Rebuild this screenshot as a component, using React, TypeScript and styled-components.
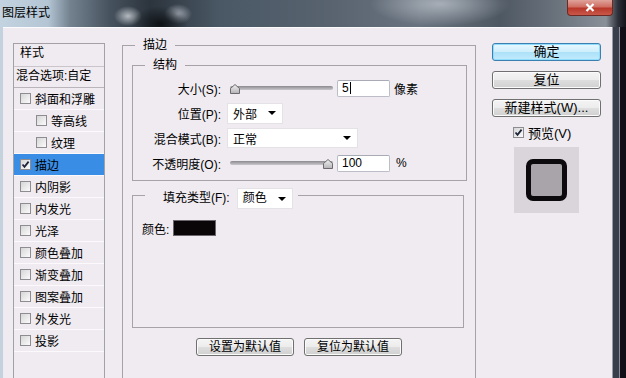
import styled, { createGlobalStyle } from 'styled-components';

const GlobalStyle = createGlobalStyle`
  html, body {
    margin: 0;
    padding: 0;
    background: #15131a;
  }
  body {
    font-family: "Liberation Sans", "Noto Sans CJK SC", sans-serif;
    font-size: 12px;
    color: #000;
  }
`;

const Window = styled.div`
  width: 626px;
  height: 378px;
  overflow: hidden;
  display: flex;
  flex-direction: column;
`;

const TitleBar = styled.div`
  height: 27px;
  flex: none;
  display: flex;
  align-items: flex-start;
  background:
    radial-gradient(ellipse 28px 18px at 160px 24px, #0e1216, transparent),
    radial-gradient(ellipse 14px 10px at 128px 16px, rgba(210, 215, 220, 0.8), transparent),
    radial-gradient(ellipse 14px 10px at 178px 14px, rgba(200, 205, 215, 0.7), transparent),
    radial-gradient(ellipse 70px 22px at 440px 4px, rgba(190, 196, 204, 0.75), transparent),
    linear-gradient(to right, #c3d3e0 0px, #b4c5d4 48px, #74828f 70px, #46525e 110px, #2c343d 150px,
      #4a5865 220px, #58636f 330px, #6a7480 420px, #4e5863 500px, #6c747e 560px, #8a9098 606px,
      #2c3038 618px, #15131a 626px);
`;

const Title = styled.div`
  padding-left: 2px;
  line-height: 26px;
  font-size: 12px;
  color: #000;
`;

const CloseButton = styled.div`
  margin-left: auto;
  margin-right: 13px;
  width: 46px;
  height: 16px;
  box-sizing: border-box;
  border: 1px solid #6e2a22;
  border-top: none;
  border-radius: 0 0 4px 4px;
  background: linear-gradient(#dfa39b 0%, #cf6e62 45%, #b8382a 55%, #c8584a 100%);
  display: flex;
  align-items: center;
  justify-content: center;
`;

const Frame = styled.div`
  flex: 1;
  display: flex;
  min-height: 0;
`;

const LeftEdge = styled.div`
  width: 3px;
  flex: none;
  background: #c4d2de;
`;

const RightEdge = styled.div`
  width: 14px;
  flex: none;
  background: linear-gradient(to right, #9a9aa4 0 1px, #383e4a 1px 7px, #8a8e98 7px 8px, #121016 8px);
`;

const Content = styled.div`
  flex: 1;
  display: flex;
  align-items: flex-start;
  padding-left: 10px;
  background: #efebf0;
  border-top: 1px solid #fbfafc;
  overflow: hidden;
`;

/* ---- left style list ---- */

const StyleList = styled.div`
  width: 92px;
  height: 360px;
  margin-top: 15px;
  flex: none;
  box-sizing: border-box;
  border: 1px solid #a3a0a6;
  display: flex;
  flex-direction: column;
`;

const ListHeader = styled.div`
  height: 23px;
  box-sizing: border-box;
  padding: 1px 0 0 6px;
  line-height: 16px;
  border-bottom: 1px solid #c9c5cb;
`;

const BlendRow = styled.div`
  height: 21px;
  box-sizing: border-box;
  padding-left: 2px;
  line-height: 19px;
  border-bottom: 1px solid #b9b5bb;
`;

const ListRow = styled.div<{ $indent?: boolean; $selected?: boolean }>`
  height: 22px;
  box-sizing: border-box;
  display: flex;
  align-items: center;
  gap: 4px;
  padding-left: ${p => (p.$indent ? 22 : 6)}px;
  border-bottom: 1px solid #fbf9fb;
  background: ${p => (p.$selected ? '#3a8de4' : 'transparent')};
`;

const Check = styled.span<{ $checked?: boolean }>`
  width: 11px;
  height: 11px;
  flex: none;
  box-sizing: border-box;
  border: 1px solid #8e8c90;
  background: linear-gradient(135deg, #d6d6d8, #fbfbfb);
  display: inline-flex;
  align-items: center;
  justify-content: center;
`;

/* ---- middle panel ---- */

const Middle = styled.div`
  width: 354px;
  margin: 9px 0 0 17px;
  flex: none;
`;

const Group = styled.fieldset<{ $mx?: string }>`
  margin: ${p => p.$mx || '0'};
  padding: 0;
  min-width: 0;
  border: 1px solid #a6a2a8;
`;

const Legend = styled.legend<{ $ml: number; $pl: number; $pr: number }>`
  margin-left: ${p => p.$ml}px;
  padding: 0 ${p => p.$pr}px 0 ${p => p.$pl}px;
  line-height: 16px;
  font-size: 12px;
`;

const FillLegend = styled.legend`
  margin-left: 12px;
  padding: 7px 5px 0 18px;
  display: flex;
  align-items: center;
  gap: 7px;
  line-height: 21px;
`;

const Form = styled.div`
  padding: 4px 0 6px;
  display: flex;
  flex-direction: column;
  gap: 3px;
`;

const FormRow = styled.div`
  height: 22px;
  display: grid;
  grid-template-columns: 88px 1fr;
  column-gap: 6px;
  align-items: center;
`;

const Label = styled.span`
  text-align: right;
  white-space: nowrap;
`;

const Control = styled.div`
  display: flex;
  align-items: center;
`;

const Track = styled.div`
  position: relative;
  width: 103px;
  height: 4px;
  margin-left: 3px;
  border-radius: 2px;
  background: linear-gradient(#8c8a8e, #c9c7cb);
`;

const Thumb = styled.svg`
  position: absolute;
  top: -2px;
`;

const Input = styled.div`
  width: 53px;
  height: 17px;
  margin-left: 4px;
  box-sizing: border-box;
  border: 1px solid #bcbdc6;
  border-top-color: #a9abb4;
  border-radius: 2px;
  background: #fff;
  padding-left: 4px;
  line-height: 15px;
  display: flex;
  align-items: center;
`;

const Caret = styled.span`
  width: 1px;
  height: 12px;
  margin-left: 1px;
  background: #000;
`;

const Unit = styled.span<{ $gap: number }>`
  margin-left: ${p => p.$gap}px;
`;

const Select = styled.div<{ $w: number; $h: number }>`
  width: ${p => p.$w}px;
  height: ${p => p.$h}px;
  box-sizing: border-box;
  border: 1px solid #e4e2e6;
  background: #fff;
  padding: 0 6px 0 5px;
  display: flex;
  align-items: center;
  justify-content: space-between;
`;

const FillBody = styled.div`
  height: 118px;
  box-sizing: border-box;
  padding: 11px 0 0 9px;
  display: flex;
  align-items: flex-start;
`;

const ColorRow = styled.div`
  display: flex;
  align-items: center;
  gap: 4px;
  height: 16px;
`;

const Swatch = styled.div`
  width: 43px;
  height: 16px;
  box-sizing: border-box;
  border: 1px solid #6a686c;
  background: #0a0608;
`;

const BottomButtons = styled.div`
  display: flex;
  justify-content: center;
  gap: 10px;
  margin-top: 10px;
  padding-bottom: 40px;
`;

const Button = styled.div<{ $w: number; $primary?: boolean; $size?: number }>`
  width: ${p => p.$w}px;
  height: 18px;
  box-sizing: border-box;
  border: 1px solid ${p => (p.$primary ? '#3c7fb1' : '#707070')};
  border-radius: 3px;
  background: ${p =>
    p.$primary
      ? 'linear-gradient(#e9f8ff 0%, #cdeefc 50%, #ace1f8 51%, #c2ebfc 100%)'
      : 'linear-gradient(#f4f4f4 0%, #ececec 50%, #dedede 51%, #d0d0d0 100%)'};
  box-shadow: ${p => (p.$primary ? 'inset 0 0 0 1px #8fdcfb' : 'inset 0 0 0 1px #fbfbfb')};
  font-size: ${p => p.$size || 12}px;
  line-height: 16px;
  text-align: center;
  white-space: nowrap;
`;

/* ---- right column ---- */

const Side = styled.div`
  width: 109px;
  margin: 15px 0 0 16px;
  flex: none;
  display: flex;
  flex-direction: column;
  gap: 10px;
`;

const PreviewToggle = styled.div`
  display: flex;
  align-items: center;
  gap: 4px;
  margin-left: 21px;
  height: 11px;
  font-size: 13px;
`;

const PreviewBox = styled.div`
  width: 65px;
  height: 66px;
  margin-top: -1px;
  align-self: center;
  background: #d9d5da;
  display: flex;
  align-items: center;
  justify-content: center;
`;

const PreviewShape = styled.div`
  width: 41px;
  height: 42px;
  box-sizing: border-box;
  border: 5px solid #0c0a0c;
  border-radius: 7px;
  background: #a8a4a9;
`;

const CheckMark = () => (
  <svg width="9" height="9" viewBox="0 0 9 9">
    <path d="M1.5 4.5 L3.5 6.8 L7.6 1.6" fill="none" stroke="#1d2538" strokeWidth="1.8" />
  </svg>
);

const Arrow = () => (
  <svg width="8" height="4" viewBox="0 0 8 4">
    <polygon points="0,0 8,0 4,4" fill="#000" />
  </svg>
);

const SliderThumb = ({ left }: { left: number }) => (
  <Thumb width="10" height="10" viewBox="0 0 10 10" style={{ left }}>
    <defs>
      <linearGradient id={`tg${left}`} x1="0" y1="0" x2="0" y2="1">
        <stop offset="0" stopColor="#f2f2f2" />
        <stop offset="1" stopColor="#b4b2b6" />
      </linearGradient>
    </defs>
    <polygon points="5,0.5 9.5,4.5 9.5,9.5 0.5,9.5 0.5,4.5" fill={`url(#tg${left})`} stroke="#6c6a6e" />
  </Thumb>
);

const layers = [
  { label: '斜面和浮雕' },
  { label: '等高线', indent: true },
  { label: '纹理', indent: true },
  { label: '描边', checked: true, selected: true },
  { label: '内阴影' },
  { label: '内发光' },
  { label: '光泽' },
  { label: '颜色叠加' },
  { label: '渐变叠加' },
  { label: '图案叠加' },
  { label: '外发光' },
  { label: '投影' },
];

export default function App() {
  return (
    <>
      <GlobalStyle />
      <Window>
        <TitleBar>
          <Title>图层样式</Title>
          <CloseButton>
            <svg width="10" height="9" viewBox="0 0 10 9">
              <path d="M1.5 1 L8.5 8 M8.5 1 L1.5 8" stroke="#fff" strokeWidth="2.2" />
            </svg>
          </CloseButton>
        </TitleBar>
        <Frame>
          <LeftEdge />
          <Content>
            <StyleList>
              <ListHeader>样式</ListHeader>
              <BlendRow>混合选项:自定</BlendRow>
              {layers.map(l => (
                <ListRow key={l.label} $indent={l.indent} $selected={l.selected}>
                  <Check $checked={l.checked}>{l.checked && <CheckMark />}</Check>
                  {l.label}
                </ListRow>
              ))}
            </StyleList>

            <Middle>
              <Group>
                <Legend $ml={12} $pl={8} $pr={8}>描边</Legend>
                <Group $mx="4px 8px 0 9px">
                  <Legend $ml={12} $pl={8} $pr={8}>结构</Legend>
                  <Form>
                    <FormRow>
                      <Label>大小(S):</Label>
                      <Control>
                        <Track>
                          <SliderThumb left={0} />
                        </Track>
                        <Input>
                          5<Caret />
                        </Input>
                        <Unit $gap={4}>像素</Unit>
                      </Control>
                    </FormRow>
                    <FormRow>
                      <Label>位置(P):</Label>
                      <Control>
                        <Select $w={56} $h={21}>
                          外部
                          <Arrow />
                        </Select>
                      </Control>
                    </FormRow>
                    <FormRow>
                      <Label>混合模式(B):</Label>
                      <Control>
                        <Select $w={131} $h={20}>
                          正常
                          <Arrow />
                        </Select>
                      </Control>
                    </FormRow>
                    <FormRow>
                      <Label>不透明度(O):</Label>
                      <Control>
                        <Track>
                          <SliderThumb left={93} />
                        </Track>
                        <Input>100</Input>
                        <Unit $gap={6}>%</Unit>
                      </Control>
                    </FormRow>
                  </Form>
                </Group>

                <Group $mx="0 11px 0 9px">
                  <FillLegend>
                    填充类型(F):
                    <Select $w={56} $h={21}>
                      颜色
                      <Arrow />
                    </Select>
                  </FillLegend>
                  <FillBody>
                    <ColorRow>
                      颜色:
                      <Swatch />
                    </ColorRow>
                  </FillBody>
                </Group>

                <BottomButtons>
                  <Button $w={98}>设置为默认值</Button>
                  <Button $w={98}>复位为默认值</Button>
                </BottomButtons>
              </Group>
            </Middle>

            <Side>
              <Button $w={109} $primary $size={13}>确定</Button>
              <Button $w={109} $size={13}>复位</Button>
              <Button $w={109} $size={13}>新建样式(W)...</Button>
              <PreviewToggle>
                <Check $checked>
                  <CheckMark />
                </Check>
                预览(V)
              </PreviewToggle>
              <PreviewBox>
                <PreviewShape />
              </PreviewBox>
            </Side>
          </Content>
          <RightEdge />
        </Frame>
      </Window>
    </>
  );
}
